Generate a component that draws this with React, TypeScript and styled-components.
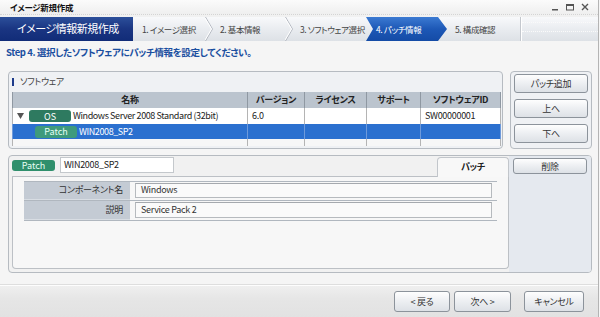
import React from "react";
import styled, { createGlobalStyle } from "styled-components";

const Global = createGlobalStyle`
  html, body { margin: 0; padding: 0; background: #f5f5f5; }
  body {
    width: 600px; height: 317px; overflow: hidden;
    font-family: "Noto Sans CJK JP", "Noto Sans", sans-serif;
    font-feature-settings: "palt" 1;
    font-size: 9px;
    line-height: 1.2;
    letter-spacing: -0.3px;
    color: #333;
  }
  * { box-sizing: border-box; }
`;

const Window = styled.div`
  width: 599px;
  height: 317px;
  display: flex;
  flex-direction: column;
  background: #f5f5f5;
  border-right: 1px solid #b4b4b4;
`;

const TitleBar = styled.div`
  height: 14px;
  display: flex;
  align-items: center;
  padding-left: 10px;
  background: linear-gradient(#fbfbfb, #efefef);
`;

const TitleText = styled.span`
  font-size: 8.5px;
  font-weight: 700;
  color: #111;
  line-height: 1;
`;

const Controls = styled.div`
  margin-left: auto;
  display: flex;
  gap: 7px;
  padding-right: 9px;
  align-items: center;
`;

const Strip = styled.div`
  height: 3px;
  border-top: 1px dotted #d4d4d4;
  background: #f1f1f1;
`;

const WizardBar = styled.div`
  height: 24px;
  display: flex;
  align-items: stretch;
  background: linear-gradient(#f8f9fb, #e8ebef 55%, #dde1e6);
`;

const Brand = styled.div`
  width: 133px;
  display: flex;
  align-items: center;
  padding-left: 17px;
  background: linear-gradient(#2c4f9a, #1a3582 50%, #112c78);
  color: #fff;
  font-size: 11px;
  letter-spacing: -0.5px;
  white-space: nowrap;
`;

const Step = styled.div<{ $w: number; $pad: number }>`
  width: ${(p) => p.$w}px;
  padding-left: ${(p) => p.$pad}px;
  display: flex;
  align-items: center;
  font-size: 8.5px;
  letter-spacing: -0.4px;
  color: #444;
  white-space: nowrap;
`;

const ActiveStep = styled.div`
  width: 81px;
  display: grid;
  align-items: center;
  font-size: 8.5px;
  letter-spacing: -0.4px;
  color: #fff;
  white-space: nowrap;
  & > * { grid-area: 1 / 1; }
`;

const ArrowShape = styled.svg`
  display: block;
  width: 81px;
  height: 24px;
`;

const ActiveLabel = styled.span`
  padding-left: 10px;
`;

const ChevronSvg = styled.svg`
  display: block;
  flex: none;
  width: 8px;
  height: 24px;
`;

const StepSep = styled.div`
  width: 2px;
  border-left: 1px solid #c4c8ce;
  border-right: 1px solid #fff;
`;

const Filler = styled.div`
  flex: 1;
  margin-top: 5px;
  height: 10px;
  border-top: 1px dotted #fafafa;
  border-bottom: 1px dotted #fafafa;
`;

const StepTitle = styled.div`
  height: 23px;
  display: flex;
  align-items: center;
  padding-left: 6px;
  padding-top: 1px;
  font-size: 9.5px;
  letter-spacing: -0.4px;
  font-weight: 700;
  color: #1b4fa0;
`;

const Main = styled.div`
  display: flex;
  flex-direction: column;
  gap: 6px;
  padding: 7px 6px 0 8px;
  background: #f5f5f5;
`;

const TopRow = styled.div`
  display: flex;
  gap: 7px;
  height: 78px;
`;

const Panel = styled.div`
  border: 1px solid #b6bbc1;
  border-radius: 4px;
  background: #eff1f4;
`;

const SoftwarePanel = styled(Panel)`
  width: 495px;
  display: flex;
  flex-direction: column;
  padding: 0 2px 2px 3px;
`;

const PanelHeader = styled.div`
  height: 20px;
  display: flex;
  align-items: center;
  gap: 6px;
  color: #444;
`;

const Marker = styled.span`
  width: 2px;
  height: 8px;
  background: #1c3a8a;
`;

const Table = styled.table`
  width: 488px;
  border-collapse: collapse;
  table-layout: fixed;
`;

const Th = styled.th<{ $w: number }>`
  width: ${(p) => p.$w}px;
  height: 16px;
  padding: 0;
  background: #bbc4ce;
  border-left: 1px solid #8f98a2;
  border-right: 1px solid #8f98a2;
  font-weight: 700;
  color: #222;
  text-align: center;
  line-height: 14px;
`;

const Tr = styled.tr<{ $sel?: boolean; $h: number }>`
  height: ${(p) => p.$h}px;
  background: ${(p) => (p.$sel ? "#2b70cf" : "#fff")};
  color: ${(p) => (p.$sel ? "#fff" : "#222")};
`;

const Td = styled.td<{ $sel?: boolean }>`
  padding: 0 0 0 4px;
  border-left: 1px solid ${(p) => (p.$sel ? "#6e9adb" : "#b4b4b4")};
  border-right: 1px solid ${(p) => (p.$sel ? "#6e9adb" : "#b4b4b4")};
  white-space: nowrap;
  line-height: 14px;
`;

const EmptyRow = styled.tr`
  height: 7px;
  background: #f7f7f7;
`;

const EmptyTd = styled.td`
  padding: 0;
  border-left: 1px solid #b4b4b4;
  border-right: 1px solid #b4b4b4;
`;

const NameCell = styled.div<{ $indent: number }>`
  display: flex;
  align-items: center;
  gap: 2px;
  padding-left: ${(p) => p.$indent}px;
  letter-spacing: -0.4px;
`;

const TriangleSvg = styled.svg`
  flex: none;
  width: 7px;
  height: 6px;
  margin-right: 3px;
`;

const Badge = styled.span<{ $tone: "os" | "patch" | "form" }>`
  width: ${(p) => (p.$tone === "form" ? 43 : 42)}px;
  height: ${(p) => (p.$tone === "form" ? 11 : 12)}px;
  flex: none;
  border-radius: 3px;
  display: inline-flex;
  align-items: center;
  justify-content: center;
  font-size: 9px;
  letter-spacing: 0;
  line-height: 1;
  background: ${(p) =>
    p.$tone === "os" ? "#2e7a60" : p.$tone === "patch" ? "#3e9a7c" : "#2f8f6c"};
  color: ${(p) => (p.$tone === "os" ? "#fff" : "#e6fff4")};
`;

const ButtonPanel = styled(Panel)`
  width: 82px;
  display: flex;
  flex-direction: column;
  gap: 6px;
  padding: 2px 3px 0 3px;
`;

const Button = styled.button<{ $w?: number; $h?: number }>`
  width: ${(p) => (p.$w ? `${p.$w}px` : "100%")};
  height: ${(p) => p.$h ?? 19}px;
  flex: none;
  padding: 0;
  border: 1px solid #8c939b;
  border-radius: 3px;
  background: linear-gradient(#fefefe, #eef0f3 45%, #dde1e6);
  font-family: inherit;
  font-feature-settings: "palt" 1;
  font-size: 9px;
  letter-spacing: -0.3px;
  color: #333;
  line-height: 1;
  display: flex;
  align-items: center;
  justify-content: center;
`;

const LowerPanel = styled.div`
  height: 118px;
  width: 584px;
  display: flex;
  border: 1px solid #b6bbc1;
  border-radius: 4px;
  background: #f1f1f1;
`;

const LowerLeft = styled.div`
  width: 500px;
  display: flex;
  flex-direction: column;
  padding: 0 0 3px 3px;
`;

const LowerHeader = styled.div`
  height: 21px;
  display: flex;
  align-items: stretch;
`;

const HeaderLeft = styled.div`
  flex: 1;
  display: flex;
  align-items: flex-start;
  border-bottom: 1px solid #bcc0c5;
`;

const HeaderBadgeWrap = styled.div`
  display: flex;
  padding-top: 4px;
`;

const NameInput = styled.div`
  width: 114px;
  height: 16px;
  margin: 1px 0 0 5px;
  border: 1px solid #c4c8cc;
  background: #fff;
  color: #222;
  padding-left: 3px;
  display: flex;
  align-items: center;
`;

const Tab = styled.div`
  margin-top: 1px;
  width: 72px;
  border: 1px solid #c2c6cb;
  border-bottom: none;
  border-radius: 4px 4px 0 0;
  background: #f8f8f8;
  font-weight: 700;
  color: #222;
  display: flex;
  align-items: center;
  justify-content: center;
`;

const InnerPanel = styled.div`
  flex: 1;
  border: 1px solid #bcc0c5;
  border-top: none;
  border-radius: 0 0 4px 4px;
  background: #f7f7f7;
  padding: 4px 11px 0 11px;
`;

const FormRow = styled.div<{ $first?: boolean }>`
  height: 20px;
  display: flex;
  border-top: ${(p) => (p.$first ? "1px solid #b0b7bf" : "none")};
  border-bottom: 1px solid #b0b7bf;
`;

const Label = styled.div`
  width: 106px;
  background: #c4cbd4;
  border-bottom: 1px solid #d8dde3;
  color: #333;
  display: flex;
  align-items: center;
  justify-content: flex-end;
  padding-right: 7px;
`;

const Value = styled.div`
  flex: 1;
  padding: 1px 5px 2px 5px;
  display: flex;
`;

const ValueBox = styled.div`
  flex: 1;
  border: 1px solid #b6babe;
  border-top-color: #a5a9ae;
  background: #fafafa;
  color: #333;
  padding-left: 5px;
  display: flex;
  align-items: center;
`;

const LowerRight = styled.div`
  flex: 1;
  background: #e5e9ef;
  border-radius: 0 3px 3px 0;
  padding: 2px 0 0 4px;
`;

const Spacer = styled.div`
  flex: 1;
  background: #f5f5f5;
`;

const Footer = styled.div`
  height: 32px;
  flex: none;
  display: flex;
  justify-content: flex-end;
  align-items: flex-start;
  padding: 5px 14px 0 0;
  border-top: 1px solid #fdfdfd;
  box-shadow: 0 -1px 0 #dedede;
  background: linear-gradient(#efefef, #e6e6e6 40%, #e2e2e2);
`;

const FooterGroup = styled.div<{ $gap: number; $ml?: number }>`
  display: flex;
  gap: ${(p) => p.$gap}px;
  margin-left: ${(p) => p.$ml ?? 0}px;
`;

const Chevron = () => (
  <ChevronSvg viewBox="0 0 8 24">
    <path d="M0.5 0 L7.5 12 L0.5 24" fill="none" stroke="#b3b8c0" strokeWidth="1" />
    <path d="M0 1 L6.5 12 L0 23" fill="none" stroke="#ffffff" strokeWidth="1" />
  </ChevronSvg>
);

const Minimize = () => (
  <svg width="8" height="8" viewBox="0 0 8 8">
    <rect x="1" y="6" width="6" height="1.5" fill="#555" />
  </svg>
);
const Maximize = () => (
  <svg width="8" height="8" viewBox="0 0 8 8">
    <rect x="0.5" y="1.5" width="7" height="5.5" fill="none" stroke="#555" strokeWidth="1" />
    <rect x="0.5" y="1.5" width="7" height="1.5" fill="#555" />
  </svg>
);
const Close = () => (
  <svg width="8" height="8" viewBox="0 0 8 8">
    <path d="M1 1 L7 7 M7 1 L1 7" stroke="#555" strokeWidth="1.4" />
  </svg>
);

const Triangle = () => (
  <TriangleSvg viewBox="0 0 7 6">
    <path d="M0 0 L7 0 L3.5 6 Z" fill="#555" />
  </TriangleSvg>
);

export default function App() {
  return (
    <>
      <Global />
      <Window>
        <TitleBar>
          <TitleText>イメージ新規作成</TitleText>
          <Controls>
            <Minimize />
            <Maximize />
            <Close />
          </Controls>
        </TitleBar>
        <Strip />
        <WizardBar>
          <Brand>イメージ情報新規作成</Brand>
          <Step $w={72} $pad={9}>1. イメージ選択</Step>
          <Chevron />
          <Step $w={72} $pad={7}>2. 基本情報</Step>
          <Chevron />
          <Step $w={73} $pad={7}>3. ソフトウェア選択</Step>
          <ActiveStep>
            <ArrowShape viewBox="0 0 81 24">
              <defs>
                <linearGradient id="act" x1="0" y1="0" x2="0" y2="1">
                  <stop offset="0" stopColor="#3b7ad2" />
                  <stop offset="0.5" stopColor="#1d58b6" />
                  <stop offset="1" stopColor="#144ba6" />
                </linearGradient>
              </defs>
              <path d="M0 0 H72 L81 12 L72 24 H0 L7 12 Z" fill="url(#act)" />
            </ArrowShape>
            <ActiveLabel>4. パッチ情報</ActiveLabel>
          </ActiveStep>
          <Step $w={73} $pad={8}>5. 構成確認</Step>
          <StepSep />
          <Filler />
        </WizardBar>
        <StepTitle>Step 4. 選択したソフトウェアにパッチ情報を設定してください。</StepTitle>
        <Main>
          <TopRow>
            <SoftwarePanel>
              <PanelHeader>
                <Marker />
                ソフトウェア
              </PanelHeader>
              <Table>
                <thead>
                  <tr>
                    <Th $w={235}>名称</Th>
                    <Th $w={57}>バージョン</Th>
                    <Th $w={62}>ライセンス</Th>
                    <Th $w={54}>サポート</Th>
                    <Th $w={80}>ソフトウェアID</Th>
                  </tr>
                </thead>
                <tbody>
                  <Tr $h={16}>
                    <Td>
                      <NameCell $indent={0}>
                        <Triangle />
                        <Badge $tone="os">OS</Badge>
                        Windows Server 2008 Standard (32bit)
                      </NameCell>
                    </Td>
                    <Td>6.0</Td>
                    <Td />
                    <Td />
                    <Td>SW00000001</Td>
                  </Tr>
                  <Tr $h={15} $sel>
                    <Td $sel>
                      <NameCell $indent={18}>
                        <Badge $tone="patch">Patch</Badge>
                        WIN2008_SP2
                      </NameCell>
                    </Td>
                    <Td $sel />
                    <Td $sel />
                    <Td $sel />
                    <Td $sel />
                  </Tr>
                  <EmptyRow>
                    <EmptyTd />
                    <EmptyTd />
                    <EmptyTd />
                    <EmptyTd />
                    <EmptyTd />
                  </EmptyRow>
                </tbody>
              </Table>
            </SoftwarePanel>
            <ButtonPanel>
              <Button>パッチ追加</Button>
              <Button>上へ</Button>
              <Button>下へ</Button>
            </ButtonPanel>
          </TopRow>
          <LowerPanel>
            <LowerLeft>
              <LowerHeader>
                <HeaderLeft>
                  <HeaderBadgeWrap>
                    <Badge $tone="form">Patch</Badge>
                  </HeaderBadgeWrap>
                  <NameInput>WIN2008_SP2</NameInput>
                </HeaderLeft>
                <Tab>パッチ</Tab>
              </LowerHeader>
              <InnerPanel>
                <FormRow $first>
                  <Label>コンポーネント名</Label>
                  <Value>
                    <ValueBox>Windows</ValueBox>
                  </Value>
                </FormRow>
                <FormRow>
                  <Label>説明</Label>
                  <Value>
                    <ValueBox>Service Pack 2</ValueBox>
                  </Value>
                </FormRow>
              </InnerPanel>
            </LowerLeft>
            <LowerRight>
              <Button $w={74} $h={16}>削除</Button>
            </LowerRight>
          </LowerPanel>
        </Main>
        <Spacer />
        <Footer>
          <FooterGroup $gap={4}>
            <Button $w={56} $h={21}>&lt; 戻る</Button>
            <Button $w={57} $h={21}>次へ &gt;</Button>
          </FooterGroup>
          <FooterGroup $gap={0} $ml={13}>
            <Button $w={60} $h={21}>キャンセル</Button>
          </FooterGroup>
        </Footer>
      </Window>
    </>
  );
}
